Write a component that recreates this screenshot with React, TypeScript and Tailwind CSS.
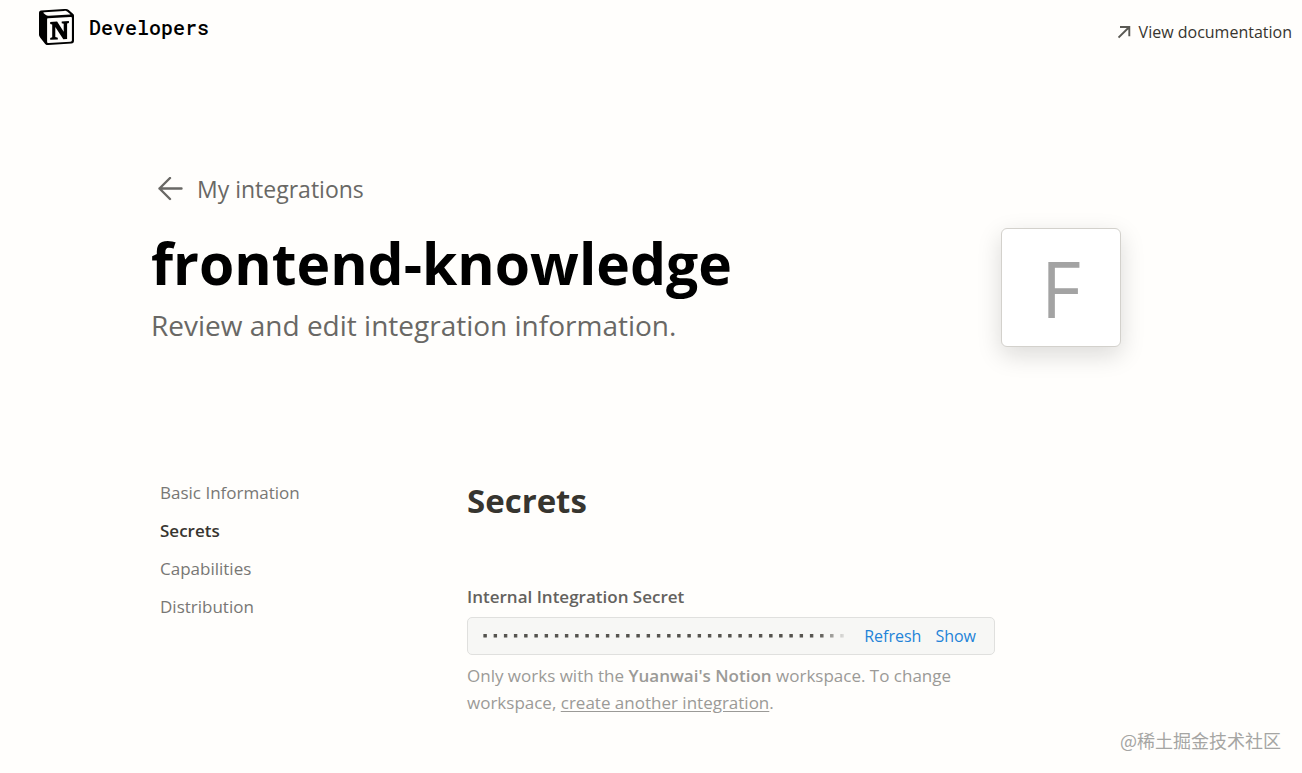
import React from "react";

const sections = ["Basic Information", "Secrets", "Capabilities", "Distribution"];

function NotionLogo() {
  return (
    <svg viewBox="0 0 36 36" className="h-9 w-9" aria-hidden="true">
      <path
        fill="#000"
        d="M2.200 1.600 25.400 0c2.200-.1 2.900.1 4.300 1.100l4 3.400c.9.7 1.300 1.200 1.300 2.400v24.600c0 1.900-.7 2.900-2.700 3.100L9.400 36c-1.700.1-2.500-.2-3.400-1.300L1.300 28.700C.4 27.500 0 26.700 0 25.600V4C0 2.700.7 1.700 2.200 1.600Z"
      />
      <path fill="#fffefc" d="M5.400 3.200 25.200 1.900c1.500-.1 1.900 0 2.900.7l3 2.300c.4.3.3.5-.2.500L9.800 6.700c-1.400.1-2 0-2.900-.7L4.700 4.200c-.5-.5-.4-.9.700-1Z" />
      <path fill="#fffefc" d="M9.200 9.200 31.500 7.900c1-.1 1.400.3 1.400 1.200v22c0 1.100-.4 1.600-1.500 1.700L9.800 34c-1.200.1-1.700-.3-1.700-1.500V10.400c0-.8.300-1.100 1.100-1.200Z" />
      <path fill="#000" d="M11.200 13l6.900-.4 6.600 10.200V14.700l-2-.5v-1.700l7.200-.4v1.800l-1.800.7v15.500l-3.800.2-8-12.300v10.100l2.500.6v1.700l-7.600.4v-1.700l2-.8V15.500l-2-.6Z" />
    </svg>
  );
}

export default function App() {
  return (
    <div className="min-h-screen bg-[#fffefc] font-['Open_Sans','Noto_Sans',sans-serif] text-[17px] leading-6 text-[#37352f]">
      <header className="flex items-start justify-between pt-[9px] pr-2.5 pl-[39px]">
        <a href="#developers" className="flex items-center gap-3.5 font-['Roboto_Mono','DejaVu_Sans_Mono',monospace] text-xl font-medium text-black">
          <NotionLogo />
          <span>Developers</span>
        </a>
        <a href="#documentation" className="mt-[11px] flex items-center gap-2 text-base">
          <svg viewBox="0 0 13 13" className="h-[13px] w-[13px]" fill="none" stroke="#5a5954" strokeWidth="1.900" aria-hidden="true">
            <path d="M.5 11.500 11 1.200M2 1h9.300v9.300" />
          </svg>
          View documentation
        </a>
      </header>

      <main className="mr-[181px] ml-[151px] pt-32">
        <div className="flex items-start justify-between">
          <div>
            <a href="#integrations" className="flex items-center gap-3.5 pl-[7px] text-[23px] leading-8 text-[#696865]">
              <svg viewBox="0 0 25 24" className="h-6 w-[25px]" fill="none" stroke="#696865" strokeWidth="2.400" strokeLinecap="round" strokeLinejoin="round" aria-hidden="true">
                <path d="M23.500 11.500H1.500M12 1 1.500 11.500 12 22" />
              </svg>
              My integrations
            </a>
            <h1 className="mt-5 text-[57px] leading-[76px] font-bold text-black">frontend-knowledge</h1>
            <p className="mt-1 text-[28px] leading-10 text-[#696865]">Review and edit integration information.</p>
          </div>
          <div className="mt-[55px] flex h-[119px] w-30 items-center justify-center rounded-md border border-[#d3d1cc] bg-white text-[78px] leading-none text-[#a3a3a3] shadow-[0_8px_24px_rgba(15,15,15,0.15)]">
            F
          </div>
        </div>

        <div className="mt-[133px] flex">
          <nav className="w-[316px] shrink-0 pt-px pl-[9px]">
            <ul className="text-[#787774]">
              {sections.map((name) => (
                <li key={name} className="h-[38px]">
                  <a
                    href={"#" + name}
                    className={name === "Secrets" ? "font-semibold text-[#37352f]" : ""}
                  >
                    {name}
                  </a>
                </li>
              ))}
            </ul>
          </nav>
          <section className="max-w-[528px] grow">
            <h2 className="text-[33px] leading-[41px] font-bold">Secrets</h2>
            <label htmlFor="secret" className="mt-16 block leading-6 font-semibold text-[#64625e]">
              Internal Integration Secret
            </label>
            <div className="mt-2 flex h-[38px] items-center rounded-[5px] border border-[#e0e0de] bg-[#f7f7f5] pr-[18px] pl-3 text-base text-[#2383d8]">
              <input
                id="secret"
                readOnly
                value={"·".repeat(60)}
                className="mr-4 w-0 grow bg-transparent font-['Liberation_Mono',monospace] text-[17px] font-bold text-[#55534e] outline-none [-webkit-text-stroke:1px_#55534e] [mask-image:linear-gradient(to_right,black_92%,transparent)]"
              />
              <button type="button" className="mr-3.5">Refresh</button>
              <button type="button">Show</button>
            </div>
            <p className="mt-[7px] leading-[27px] text-[#9b9a97]">
              Only works with the <strong className="font-semibold">Yuanwai's Notion</strong> workspace. To change workspace,{" "}
              <a href="#create" className="underline underline-offset-2">create another integration</a>.
            </p>
          </section>
        </div>
      </main>
      <footer className="pt-2.5 pr-[21px] text-right font-['Noto_Sans_CJK_SC',sans-serif] text-lg text-[#a5a5a3]">
        @稀土掘金技术社区
      </footer>
    </div>
  );
}
